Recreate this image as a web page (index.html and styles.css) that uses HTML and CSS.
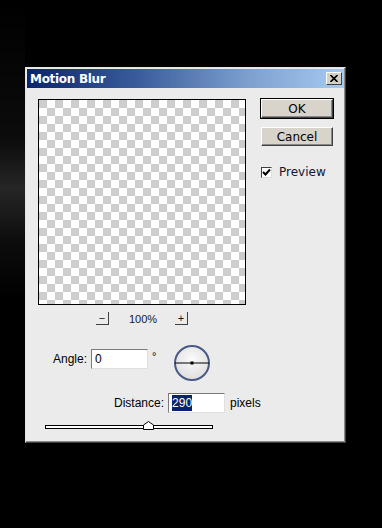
FILE: index.html
```html
<!DOCTYPE html>
<html lang="en">
<head>
  <meta charset="UTF-8">
  <title>Motion Blur</title>
  <link rel="stylesheet" href="styles.css">
</head>
<body>
  <div class="dialog">
    <div class="titlebar">
      <span class="title">Motion Blur</span>
      <span class="close">
        <svg width="8" height="7" viewBox="0 0 8 7"><path d="M0.5 0 L7.5 7 M7.5 0 L0.5 7" stroke="#000" stroke-width="1.6"/></svg>
      </span>
    </div>

    <div class="top">
      <div class="preview-col">
        <div class="preview"></div>
        <div class="zoom-row">
          <span class="zoom-btn">&minus;</span>
          <span class="zoom-val">100%</span>
          <span class="zoom-btn">+</span>
        </div>
      </div>

      <div class="buttons">
        <button class="btn btn-default">OK</button>
        <button class="btn">Cancel</button>
        <label class="check">
          <span class="box">
            <svg width="9" height="9" viewBox="0 0 9 9"><path d="M1 4 L3.5 6.5 L8 1.5" fill="none" stroke="#000" stroke-width="2"/></svg>
          </span>
          Preview
        </label>
      </div>
    </div>

    <div class="angle-row">
      <span class="label">Angle:</span>
      <span class="field">0</span>
      <span class="deg">&deg;</span>
      <svg class="dial" width="38" height="38" viewBox="0 0 38 38">
        <defs>
          <radialGradient id="dialbg" cx="50%" cy="40%" r="60%">
            <stop offset="0" stop-color="#fbfbfb"/>
            <stop offset="1" stop-color="#dedede"/>
          </radialGradient>
        </defs>
        <circle cx="19" cy="19" r="17" fill="url(#dialbg)" stroke="#4a5a86" stroke-width="2"/>
        <line x1="2" y1="19" x2="36" y2="19" stroke="#000" stroke-width="1"/>
        <rect x="17.5" y="17.5" width="3" height="3" fill="#000"/>
      </svg>
    </div>

    <div class="distance-row">
      <span class="label">Distance:</span>
      <span class="field"><span class="sel">290</span></span>
      <span class="unit">pixels</span>
    </div>

    <div class="slider">
      <div class="track"></div>
      <svg class="thumb" width="11" height="9" viewBox="0 0 11 9">
        <path d="M0.5 8.5 V4 L5.5 0.5 L10.5 4 V8.5 Z" fill="#fff" stroke="#000" stroke-width="1"/>
      </svg>
    </div>
  </div>
</body>
</html>
```

FILE: styles.css
```css
body {
  margin: 0;
  padding: 0;
  height: 528px;
  font-family: 'Liberation Sans', Arial, sans-serif;
  background: #000 linear-gradient(to bottom, #000 0, #0c0c0c 140px, #262626 188px, #0d0d0d 240px, #000 300px) no-repeat;
  background-size: 25px 100%;
  overflow: hidden;
}

.dialog {
  position: relative;
  margin: 67px 0 0 25px;
  width: 317px;
  height: 372px;
  padding: 1px;
  background: #ebebeb;
  border: 1px solid #e4e4e4;
  border-right-color: #404040;
  border-bottom-color: #404040;
  box-shadow: inset -1px -1px 0 #8a8a8a;
}

.titlebar {
  height: 19px;
  display: flex;
  align-items: center;
  justify-content: space-between;
  padding: 0 2px 0 3px;
  background: linear-gradient(to right, #0a246a 0%, #3a5c9c 35%, #7da0cf 70%, #a6caf0 100%);
}

.title {
  color: #fff;
  font-family: 'DejaVu Sans', sans-serif;
  font-weight: bold;
  font-size: 12px;
  letter-spacing: -0.3px;
}

.close {
  width: 14px;
  height: 11px;
  display: flex;
  align-items: center;
  justify-content: center;
  background: #d4d0c8;
  border: 1px solid #fff;
  border-right-color: #404040;
  border-bottom-color: #404040;
}

.top {
  display: flex;
  padding: 11px 0 0 11px;
}

.preview {
  width: 206px;
  height: 204px;
  border: 1px solid #000;
  background-color: #fff;
  background-image: conic-gradient(#cdcdcd 25%, #fff 0 50%, #cdcdcd 0 75%, #fff 0);
  background-size: 16px 16px;
  background-position: 8px 0;
}

.zoom-row {
  display: flex;
  justify-content: center;
  align-items: center;
  gap: 20px;
  margin-top: 7px;
  height: 13px;
  font-size: 11px;
  color: #1a1a1a;
}

.zoom-btn {
  width: 12px;
  height: 12px;
  background: #ebebeb;
  border-right: 1px solid #404040;
  border-bottom: 1px solid #404040;
  line-height: 12px;
  text-align: center;
  font-size: 11px;
}

.zoom-val {
  width: 26px;
  text-align: center;
}

.buttons {
  display: flex;
  flex-direction: column;
  margin-left: 15px;
}

.btn {
  width: 72px;
  height: 19px;
  padding: 0;
  margin-bottom: 9px;
  background: #d8d4cc;
  border: 1px solid #fff;
  border-right-color: #404040;
  border-bottom-color: #404040;
  box-shadow: inset -1px -1px 0 #888;
  font-family: 'DejaVu Sans', sans-serif;
  font-size: 12px;
  color: #000;
}

.btn-default {
  outline: 1px solid #000;
}

.check {
  display: flex;
  align-items: center;
  gap: 7px;
  margin-top: 10px;
  font-family: 'DejaVu Sans', sans-serif;
  font-size: 12px;
  color: #141430;
}

.box {
  width: 9px;
  height: 9px;
  background: #fff;
  border: 1px solid #404040;
  border-right-color: #ddd;
  border-bottom-color: #ddd;
  display: flex;
}

.angle-row,
.distance-row {
  display: flex;
  align-items: center;
  height: 20px;
  font-size: 12px;
  color: #000;
}

.angle-row {
  margin-top: 24px;
  padding-left: 26px;
}

.label {
  margin-right: 4px;
}

.field {
  width: 52px;
  height: 18px;
  padding-left: 3px;
  background: #fff;
  border: 1px solid #7a7a7a;
  border-right-color: #e0e0e0;
  border-bottom-color: #e0e0e0;
  line-height: 18px;
}

.deg {
  margin-left: 4px;
  font-size: 11px;
  align-self: flex-start;
  margin-top: 1px;
}

.dial {
  margin: 2px 0 0 17px;
  flex: none;
  align-self: center;
  margin-top: 4px;
  margin-bottom: -4px;
}

.distance-row {
  margin-top: 24px;
  padding-left: 87px;
}

.sel {
  background: #0a246a;
  color: #fff;
  padding: 1px 0;
}

.unit {
  margin-left: 5px;
}

.slider {
  position: relative;
  margin: 9px 0 0 18px;
  width: 168px;
  height: 9px;
}

.track {
  position: absolute;
  top: 3px;
  left: 0;
  width: 166px;
  height: 2px;
  background: #fff;
  border: 1px solid #000;
}

.thumb {
  position: absolute;
  left: 98px;
  top: -1px;
}
```
